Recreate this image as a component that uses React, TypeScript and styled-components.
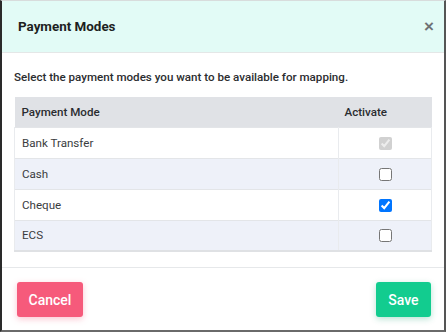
import React, { useState } from 'react'
import styled, { createGlobalStyle } from 'styled-components'

const GlobalStyle = createGlobalStyle`
  html, body {
    margin: 0;
    padding: 0;
    background: #ffffff;
  }
  * {
    box-sizing: border-box;
  }
`

const Modal = styled.div`
  display: flex;
  flex-direction: column;
  width: 446px;
  height: 332px;
  background: #ffffff;
  border-left: 2px solid #2a2a2a;
  border-right: 2px solid #555;
  border-bottom: 2px solid #6a6a6a;
  border-top: 1px solid #d8dcdc;
  font-family: Roboto, "Liberation Sans", sans-serif;
  color: #212529;
`

const Header = styled.div`
  display: flex;
  align-items: center;
  justify-content: space-between;
  height: 52px;
  padding: 0 10px 0 16px;
  background: #e2fbf6;
  border-bottom: 1px solid #e4e7e7;
`

const Title = styled.h4`
  margin: 0;
  font-size: 13.4px;
  font-weight: 700;
  color: #1d1f22;
`

const Close = styled.button`
  border: none;
  background: transparent;
  padding: 0;
  font-family: "Liberation Sans", sans-serif;
  font-size: 17px;
  font-weight: 700;
  line-height: 1;
  color: #6f7275;
  cursor: pointer;
`

const Body = styled.div`
  flex: 1;
  padding: 16px 12px 15px 12px;
`

const Intro = styled.p`
  margin: 0 0 12px;
  font-size: 11.6px;
  line-height: 16px;
  font-weight: 500;
  color: #2b2d30;
`

const Table = styled.table`
  width: 100%;
  border-collapse: collapse;
  font-size: 11.6px;
  border-bottom: 2px solid #dfe1e4;
`

const Th = styled.th<{ $narrow?: boolean }>`
  height: 30px;
  padding: 0 ${p => (p.$narrow ? '6px' : '7px')};
  background: #e0e2e6;
  font-weight: 500;
  color: #2a2c30;
  text-align: left;
  width: ${p => (p.$narrow ? '93px' : 'auto')};
`

const Row = styled.tr<{ $alt?: boolean }>`
  background: ${p => (p.$alt ? '#eef1f9' : '#ffffff')};
`

const Td = styled.td<{ $center?: boolean }>`
  height: 31px;
  padding: 0 7px;
  color: #3a3c40;
  border-top: 1px solid #e3e5e8;
  border-left: 1px solid ${p => (p.$center ? '#e3e5e8' : '#e9ebee')};
  border-right: 1px solid #e9ebee;
  text-align: ${p => (p.$center ? 'center' : 'left')};
  vertical-align: middle;
`

const Check = styled.input`
  width: 13px;
  height: 13px;
  margin: 0;
  vertical-align: middle;
`

const Footer = styled.div`
  display: flex;
  justify-content: space-between;
  align-items: center;
  padding: 14px 13px 13px 15px;
  border-top: 1px solid #e6e8ea;
`

const Button = styled.button<{ $tone: 'danger' | 'success' }>`
  height: 35px;
  padding: 0 ${p => (p.$tone === 'danger' ? '11.5px' : '12.5px')};
  border: none;
  border-radius: 3px;
  font-family: Roboto, "Liberation Sans", sans-serif;
  font-size: 14px;
  font-weight: 500;
  color: #ffffff;
  background: ${p => (p.$tone === 'danger' ? '#f65a7b' : '#12cc8f')};
  box-shadow: 0 2px 6px ${p => (p.$tone === 'danger' ? 'rgba(246, 90, 123, 0.35)' : 'rgba(18, 160, 110, 0.3)')};
  cursor: pointer;
`

const modes = [
  { name: 'Bank Transfer', checked: true, disabled: true },
  { name: 'Cash', checked: false },
  { name: 'Cheque', checked: true },
  { name: 'ECS', checked: false },
]

export default function App() {
  const [state, setState] = useState(modes.map(m => m.checked))

  const toggle = (i: number) => {
    setState(s => s.map((v, j) => (j === i ? !v : v)))
  }

  return (
    <>
      <GlobalStyle />
      <Modal>
        <Header>
          <Title>Payment Modes</Title>
          <Close aria-label="Close">×</Close>
        </Header>
        <Body>
          <Intro>Select the payment modes you want to be available for mapping.</Intro>
          <Table>
            <thead>
              <tr>
                <Th>Payment Mode</Th>
                <Th $narrow>Activate</Th>
              </tr>
            </thead>
            <tbody>
              {modes.map((m, i) => (
                <Row key={m.name} $alt={i % 2 === 1}>
                  <Td>{m.name}</Td>
                  <Td $center>
                    <Check
                      type="checkbox"
                      checked={state[i]}
                      disabled={m.disabled}
                      onChange={() => toggle(i)}
                    />
                  </Td>
                </Row>
              ))}
            </tbody>
          </Table>
        </Body>
        <Footer>
          <Button $tone="danger">Cancel</Button>
          <Button $tone="success">Save</Button>
        </Footer>
      </Modal>
    </>
  )
}
